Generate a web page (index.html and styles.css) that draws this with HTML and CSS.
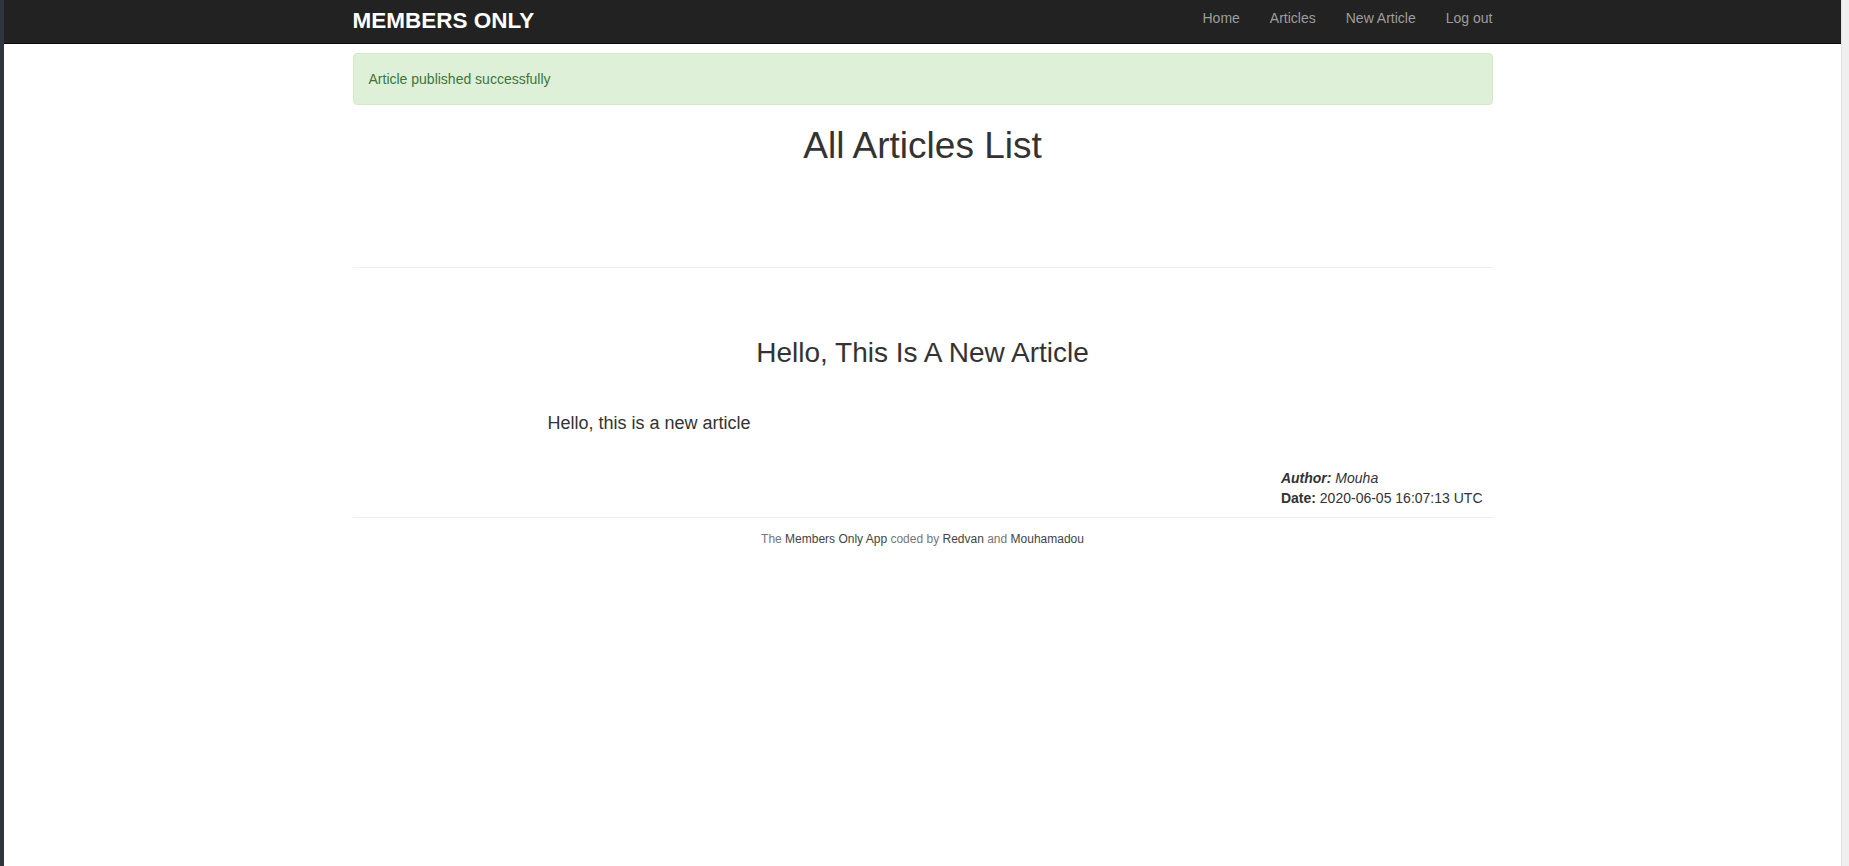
FILE: index.html
```html
<!DOCTYPE html>
<html lang="en">
<head>
<meta charset="utf-8">
<title>Members Only</title>
<link rel="stylesheet" href="styles.css">
</head>
<body>
<div class="frame">
  <div class="edge-left"></div>
  <div class="page">
    <nav class="navbar">
      <div class="container navbar-inner">
        <a class="brand" href="#">MEMBERS ONLY</a>
        <ul class="nav-links">
          <li><a href="#">Home</a></li>
          <li><a href="#">Articles</a></li>
          <li><a href="#">New Article</a></li>
          <li><a href="#">Log out</a></li>
        </ul>
      </div>
    </nav>
    <main class="container">
      <div class="alert">Article published successfully</div>
      <h1 class="page-title">All Articles List</h1>
      <hr class="rule rule-top">
      <article class="article">
        <h2 class="article-title">Hello, This Is A New Article</h2>
        <p class="article-body">Hello, this is a new article</p>
        <div class="meta-row">
          <div class="meta">
            <div><b><i>Author:</i></b> <i>Mouha</i></div>
            <div><b>Date:</b> 2020-06-05 16:07:13 UTC</div>
          </div>
        </div>
      </article>
      <hr class="rule rule-footer">
      <footer class="footer">The <a href="#">Members Only App</a> coded by <a href="#">Redvan</a> and <a href="#">Mouhamadou</a></footer>
    </main>
  </div>
  <div class="edge-right"></div>
</div>
</body>
</html>
```

FILE: styles.css
```css
html, body {
  margin: 0;
  padding: 0;
  background: #fff;
}
body {
  font-family: "Liberation Sans", Arial, Helvetica, sans-serif;
  font-size: 14px;
  line-height: 1.42857;
  color: #333;
}
.frame {
  display: flex;
  min-height: 100vh;
}
.edge-left {
  width: 4px;
  flex: none;
  background: #2f343d;
}
.edge-right {
  width: 7px;
  flex: none;
  background: #efefef;
  border-left: 1px solid #e2e2e2;
}
.page {
  flex: 1;
  min-width: 0;
}
.container {
  width: 1140px;
  margin: 0 auto;
}
.navbar {
  background: #222;
  height: 44px;
  border-bottom: 1px solid #080808;
  box-sizing: border-box;
}
.navbar-inner {
  display: flex;
  align-items: center;
  justify-content: space-between;
  height: 100%;
}
.brand {
  color: #fff;
  font-weight: bold;
  font-size: 22.5px;
  line-height: 26px;
  text-decoration: none;
  margin-top: -2px;
}
.nav-links {
  list-style: none;
  margin: 0;
  padding: 0;
  display: flex;
  gap: 30px;
  margin-top: -6px;
}
.nav-links a {
  color: #9d9d9d;
  text-decoration: none;
  font-size: 14px;
  line-height: 20px;
}
.alert {
  margin-top: 9px;
  padding: 15px;
  background: #dff0d8;
  border: 1px solid #d6e9c6;
  border-radius: 4px;
  color: #3c763d;
  line-height: 20px;
}
.page-title {
  margin: 21px 0 0;
  text-align: center;
  font-size: 37px;
  font-weight: normal;
  line-height: 1.1;
  color: #333;
}
.rule {
  border: 0;
  border-top: 1px solid #eee;
  margin: 0;
}
.rule-top {
  margin-top: 100px;
}
.article-title {
  margin: 70px 0 0;
  text-align: center;
  font-size: 28px;
  font-weight: normal;
  line-height: 1.1;
  color: #333;
}
.article-body {
  margin: 42px 0 0;
  padding-left: 195px;
  font-size: 18px;
  line-height: 26px;
}
.meta-row {
  display: flex;
  justify-content: flex-end;
  padding-right: 10px;
  margin-top: 32px;
}
.meta {
  line-height: 20px;
}
.rule-footer {
  margin-top: 9px;
}
.footer {
  margin-top: 13px;
  text-align: center;
  font-size: 12px;
  line-height: 17px;
  color: #777;
}
.footer a {
  color: #444;
  text-decoration: none;
}
```
